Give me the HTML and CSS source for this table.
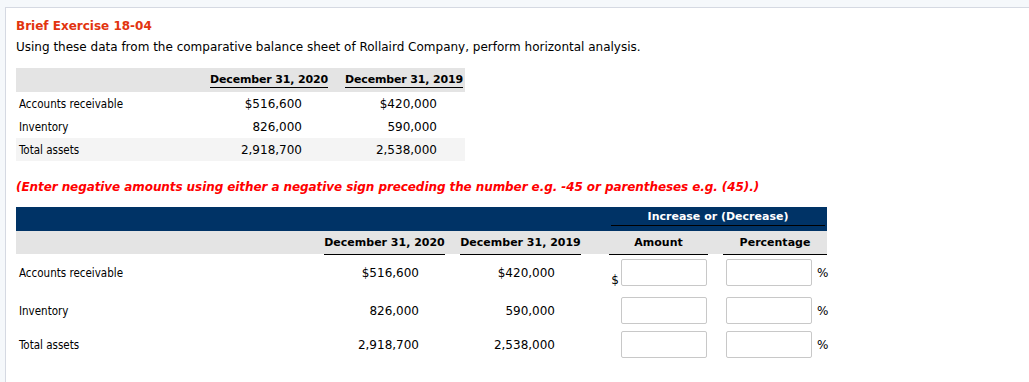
FILE: index.html
```html
<!DOCTYPE html>
<html>
<head>
<meta charset="utf-8">
<link rel="stylesheet" href="styles.css">
</head>
<body>
<div class="panel">
  <div class="title">Brief Exercise 18-04</div>
  <div class="intro">Using these data from the comparative balance sheet of Rollaird Company, perform horizontal analysis.</div>

  <div class="data">
    <div class="drow head">
      <div></div>
      <div class="hcell"><span class="ul">December 31, 2020</span></div>
      <div></div>
      <div class="hcell"><span class="ul">December 31, 2019</span></div>
      <div></div>
    </div>
    <div class="drow">
      <div class="lbl">Accounts receivable</div>
      <div class="num">$516,600</div>
      <div></div>
      <div class="num">$420,000</div>
      <div></div>
    </div>
    <div class="drow">
      <div class="lbl">Inventory</div>
      <div class="num">826,000</div>
      <div></div>
      <div class="num">590,000</div>
      <div></div>
    </div>
    <div class="drow shade">
      <div class="lbl">Total assets</div>
      <div class="num">2,918,700</div>
      <div></div>
      <div class="num">2,538,000</div>
      <div></div>
    </div>
  </div>

  <div class="note">(Enter negative amounts using either a negative sign preceding the number e.g. -45 or parentheses e.g. (45).)</div>

  <div class="work">
    <div class="wrow navy">
      <div class="inc"><span class="incul">Increase or (Decrease)</span></div>
    </div>
    <div class="wrow whead">
      <div></div>
      <div class="wh">December 31, 2020</div>
      <div></div>
      <div class="wh">December 31, 2019</div>
      <div></div>
      <div class="wh">Amount</div>
      <div></div>
      <div class="wh">Percentage</div>
    </div>
    <div class="wrow line r1">
      <div class="lbl">Accounts receivable</div>
      <div class="num">$516,600</div>
      <div></div>
      <div class="num">$420,000</div>
      <div></div>
      <div class="amt"><span class="cur">$</span><input class="box" type="text"></div>
      <div></div>
      <div class="pct"><input class="box" type="text"><span class="sym">%</span></div>
    </div>
    <div class="wrow line r2">
      <div class="lbl">Inventory</div>
      <div class="num">826,000</div>
      <div></div>
      <div class="num">590,000</div>
      <div></div>
      <div class="amt"><input class="box" type="text"></div>
      <div></div>
      <div class="pct"><input class="box" type="text"><span class="sym">%</span></div>
    </div>
    <div class="wrow line r3">
      <div class="lbl">Total assets</div>
      <div class="num">2,918,700</div>
      <div></div>
      <div class="num">2,538,000</div>
      <div></div>
      <div class="amt"><input class="box" type="text"></div>
      <div></div>
      <div class="pct"><input class="box" type="text"><span class="sym">%</span></div>
    </div>
  </div>
</div>
</body>
</html>
```

FILE: styles.css
```css
html, body {
  margin: 0;
  padding: 0;
}
body {
  background: #f5f8fb;
  font-family: "DejaVu Sans", Verdana, sans-serif;
  color: #000;
  height: 382px;
  overflow: hidden;
}
.panel {
  margin: 7px 0 0 5px;
  background: #fff;
  border: 1px solid #d5d9e2;
  border-right: none;
  border-bottom: none;
  padding: 10px 0 0 10px;
  height: 380px;
  box-sizing: border-box;
  overflow: hidden;
}
.title {
  color: #e2340f;
  font-weight: bold;
  font-size: 12px;
  line-height: 16px;
}
.intro {
  font-size: 12px;
  line-height: 16px;
  margin-top: 5px;
}
.data {
  width: 449px;
  margin-top: 13px;
}
.drow {
  display: grid;
  grid-template-columns: 194px 118px 17px 118px 2px;
  height: 23px;
  align-items: center;
  font-size: 12px;
}
.drow.head {
  height: 24px;
  background: #e4e4e4;
  align-items: end;
}
.drow.shade {
  background: #f4f4f4;
}
.hcell {
  font-weight: bold;
  font-size: 11px;
  white-space: nowrap;
}
.ul {
  display: block;
  text-align: center;
  border-bottom: 1px solid #000;
  padding-bottom: 1px;
  margin-bottom: 4px;
  letter-spacing: -0.15px;
}
.lbl {
  font-family: "DejaVu Sans Condensed", "DejaVu Sans", sans-serif;
  font-size: 11.5px;
  padding-left: 3px;
}
.num {
  text-align: right;
  padding-right: 26px;
  font-size: 12px;
}
.note {
  color: #f00;
  font-weight: bold;
  font-style: italic;
  font-size: 12px;
  line-height: 16px;
  margin-top: 18px;
  letter-spacing: -0.08px;
}
.work {
  width: 811px;
  margin-top: 12px;
}
.wrow {
  display: grid;
  grid-template-columns: 308px 121px 15px 121px 28px 99px 15px 104px;
  align-items: center;
  font-size: 11px;
}
.wrow.navy {
  background: #003366;
  height: 24px;
  display: flex;
  justify-content: flex-end;
  align-items: flex-end;
}
.inc {
  width: 214px;
  margin-right: 2px;
  color: #fff;
  font-weight: bold;
  font-size: 11px;
}
.incul {
  display: block;
  text-align: center;
  border-bottom: 1px solid #000;
  padding-bottom: 2px;
  margin-bottom: 5px;
}
.wrow.whead {
  background: #e4e4e4;
  height: 23px;
  align-items: end;
}
.wh {
  font-weight: bold;
  text-align: center;
  border-bottom: 1px solid #000;
  padding-bottom: 5px;
  margin-bottom: -1px;
}
.wrow.line {
  height: 27px;
}
.wrow.r1 { margin-top: 5px; }
.wrow.r2 { margin-top: 11px; }
.wrow.r3 { margin-top: 7px; }
.amt {
  display: flex;
  align-items: flex-end;
  justify-content: flex-end;
  padding-right: 1px;
}
.cur {
  font-size: 12px;
  margin-right: 2px;
  line-height: 12px;
  margin-bottom: 0;
}
.pct {
  display: flex;
  align-items: center;
  padding-left: 3px;
}
.sym {
  margin-left: 5px;
  font-size: 12px;
}
.box {
  width: 86px;
  height: 27px;
  box-sizing: border-box;
  border: 1px solid #c8c8c8;
  border-radius: 2px;
  padding: 0 4px;
  margin: 0;
  background: #fff;
  font-family: inherit;
}
```
